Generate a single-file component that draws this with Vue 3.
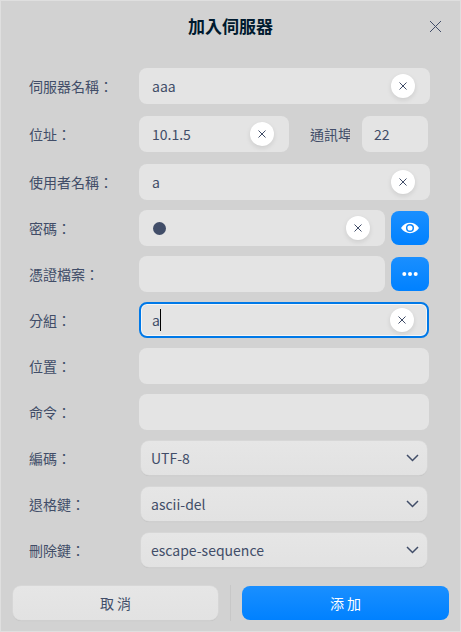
<script setup>
import { ref } from 'vue'

const rows = ref([
  { label: '伺服器名稱：', kind: 'text', value: 'aaa', clear: true, size: 'wide' },
  { label: '位址：', kind: 'text', value: '10.1.5', clear: true, size: 'address', port: '22' },
  { label: '使用者名稱：', kind: 'text', value: 'a', clear: true, size: 'wide' },
  { label: '密碼：', kind: 'password', clear: true, size: 'short', action: 'eye' },
  { label: '憑證檔案：', kind: 'text', value: '', size: 'short', action: 'dots' },
  { label: '分組：', kind: 'text', value: 'a', clear: true, size: 'normal', focused: true },
  { label: '位置：', kind: 'text', value: '', size: 'normal' },
  { label: '命令：', kind: 'text', value: '', size: 'normal' },
  { label: '編碼：', kind: 'select', value: 'UTF-8' },
  { label: '退格鍵：', kind: 'select', value: 'ascii-del' },
  { label: '刪除鍵：', kind: 'select', value: 'escape-sequence' },
])
</script>

<template>
  <main class="dialog">
    <header class="header">
      <h1 class="title">加入伺服器</h1>
      <button class="close" aria-label="關閉">
        <svg width="13" height="13" viewBox="0 0 13 13"><path d="M1 1 L12 12 M12 1 L1 12" /></svg>
      </button>
    </header>

    <section class="form">
      <div v-for="row in rows" :key="row.label" class="row" :class="{ spaced: row.size === 'wide' || row.port }">
        <span class="label">{{ row.label }}</span>

        <div v-if="row.kind === 'select'" class="select">
          <span>{{ row.value }}</span>
          <svg width="13" height="8" viewBox="0 0 13 8"><path d="M1 1 L6.5 6.5 L12 1" /></svg>
        </div>

        <div v-else class="field" :class="[row.size, { focused: row.focused }]">
          <span v-if="row.kind === 'password'" class="mask"></span>
          <span v-else class="value">{{ row.value }}</span>
          <span v-if="row.focused" class="caret"></span>
          <button v-if="row.clear" class="clear" aria-label="清除">
            <svg width="8" height="8" viewBox="0 0 8 8"><path d="M0.5 0.5 L7.5 7.5 M7.5 0.5 L0.5 7.5" /></svg>
          </button>
        </div>

        <template v-if="row.port">
          <span class="port-label">通訊埠</span>
          <div class="field port"><span class="value">{{ row.port }}</span></div>
        </template>

        <button v-if="row.action" class="action">
          <svg v-if="row.action === 'eye'" width="18" height="12" viewBox="0 0 18 12">
            <path class="solid" d="M0 6 C2.2 2.6 5.4 0.8 9 0.8 C12.6 0.8 15.8 2.6 18 6 C15.8 9.4 12.6 11.2 9 11.2 C5.4 11.2 2.2 9.4 0 6 Z" />
            <circle class="iris" cx="9" cy="6" r="3.3" />
            <circle class="solid" cx="8" cy="5" r="1.3" />
          </svg>
          <svg v-else width="16" height="4" viewBox="0 0 16 4">
            <circle class="solid" cx="2.3" cy="2" r="2" />
            <circle class="solid" cx="8" cy="2" r="2" />
            <circle class="solid" cx="13.7" cy="2" r="2" />
          </svg>
        </button>
      </div>
    </section>

    <footer class="footer">
      <button class="button cancel">取 消</button>
      <span class="divider"></span>
      <button class="button add">添 加</button>
    </footer>
  </main>
</template>

<style>
body {
  margin: 0;
  overflow: hidden;
}
</style>

<style scoped>
.dialog {
  box-sizing: border-box;
  width: 461px;
  height: 632px;
  display: flex;
  flex-direction: column;
  border: 1px solid #dfdfdf;
  background: #d2d2d2;
  color: #414d68;
  font: 14px/20px "Noto Sans CJK TC", sans-serif;
}
button {
  border: 0;
  padding: 0;
  font: inherit;
  color: inherit;
}
svg {
  display: block;
  fill: none;
  stroke: #414d68;
}
.header {
  display: grid;
  grid-template-columns: 50px 1fr 50px;
  align-items: center;
  height: 50px;
  margin-bottom: 17px;
}
.title {
  grid-column: 2;
  margin: 0;
  text-align: center;
  font-size: 17px;
  line-height: 24px;
  font-weight: 700;
  color: #001a2e;
}
.close {
  justify-self: center;
  background: none;
}
.close svg {
  stroke-width: 1;
}
.form {
  padding-left: 28px;
}
.row {
  display: flex;
  align-items: center;
  height: 36px;
  margin-bottom: 10px;
}
.row.spaced {
  margin-bottom: 12px;
}
.row.spaced:nth-child(3) {
  margin-bottom: 10px;
}
.label {
  width: 110px;
  flex: none;
  white-space: nowrap;
}
.field {
  box-sizing: border-box;
  display: flex;
  align-items: center;
  height: 36px;
  padding: 0 15px 0 13px;
  border-radius: 8px;
  background: #e4e4e4;
}
.wide { width: 291px; }
.normal { width: 290px; }
.short { width: 246px; }
.address { width: 150px; }
.port {
  width: 66px;
  padding-left: 12px;
}
.port-label {
  width: 40px;
  margin: 0 12px 0 21px;
  overflow: hidden;
  white-space: nowrap;
}
.focused {
  padding: 0 13px 0 11px;
  border: 2px solid #0079e8;
  box-shadow: inset 0 0 0 1px #f6f6f6;
}
.caret {
  width: 1px;
  height: 22px;
  background: #000;
}
.mask {
  width: 13px;
  height: 13px;
  margin-left: 0.5px;
  border-radius: 50%;
  background: #414d68;
}
.clear {
  display: grid;
  place-items: center;
  width: 24px;
  height: 24px;
  margin-left: auto;
  border-radius: 50%;
  background: #fff;
  box-shadow: 0 2px 5px rgba(0, 0, 0, 0.1);
}
.action {
  display: grid;
  place-items: center;
  width: 38px;
  height: 34px;
  margin-left: 6px;
  border-radius: 8px;
  background: linear-gradient(#1a8fff, #0081ff);
}
.solid {
  fill: #fff;
  stroke: none;
}
.iris {
  stroke: #0e88ff;
  stroke-width: 1.5;
}
.select {
  box-sizing: border-box;
  display: flex;
  align-items: center;
  justify-content: space-between;
  width: 286px;
  height: 34px;
  margin-left: 2px;
  padding: 0 8px 0 10px;
  border-radius: 8px;
  background: linear-gradient(#e6e6e6, #e2e2e2);
  box-shadow: 0 0 0 0.5px #dcdcdc, 0 1px 1px rgba(0, 0, 0, 0.08);
}
.select svg {
  margin-bottom: 1px;
  stroke-width: 1.5;
}
.footer {
  display: flex;
  align-items: center;
  padding: 7px 11px 0 12px;
}
.button {
  height: 34px;
  border-radius: 8px;
}
.cancel {
  width: 205px;
  background: linear-gradient(#e6e6e6, #e2e2e2);
  box-shadow: 0 0 0 0.5px #dcdcdc, 0 1px 1px rgba(0, 0, 0, 0.08);
}
.divider {
  width: 1px;
  height: 36px;
  margin: 0 11px 0 12px;
  background: #c7c7c7;
}
.add {
  width: 207px;
  background: linear-gradient(#1a8fff, #0081ff);
  color: #fff;
}
</style>
